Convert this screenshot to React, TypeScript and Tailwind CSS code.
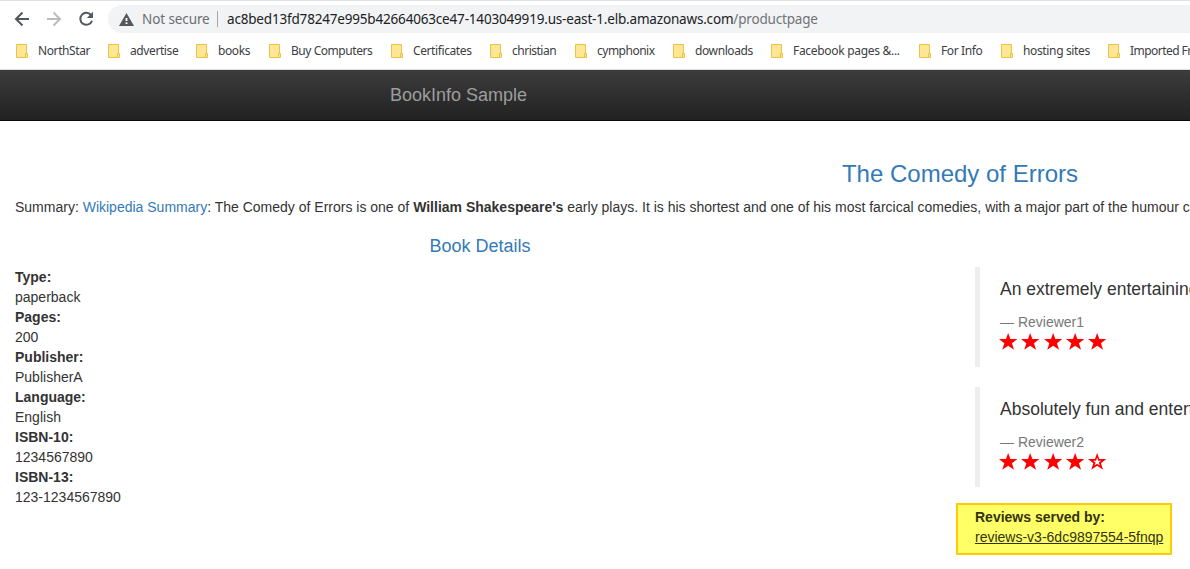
import React from "react";

const bookmarks = [
  { label: "NorthStar", width: "w-[92px]", spacing: "tracking-[-0.4px]" },
  { label: "advertise", width: "w-[88px]", spacing: "tracking-[-0.4px]" },
  { label: "books", width: "w-[73px]", spacing: "tracking-[-0.4px]" },
  { label: "Buy Computers", width: "w-[122px]", spacing: "tracking-[-0.45px]" },
  { label: "Certificates", width: "w-[99px]", spacing: "tracking-[-0.4px]" },
  { label: "christian", width: "w-[85px]", spacing: "tracking-[-0.5px]" },
  { label: "cymphonix", width: "w-[98px]", spacing: "tracking-[-0.5px]" },
  { label: "downloads", width: "w-[98px]", spacing: "tracking-[-0.4px]" },
  { label: "Facebook pages &...", width: "w-[148px]", spacing: "tracking-[-0.3px]" },
  { label: "For Info", width: "w-[82px]", spacing: "tracking-[-0.4px]" },
  { label: "hosting sites", width: "w-[107px]", spacing: "tracking-[-0.35px]" },
  { label: "Imported From IE", width: "w-[120px]", spacing: "tracking-[-0.55px]" },
];

const details = [
  ["Type:", "paperback"],
  ["Pages:", "200"],
  ["Publisher:", "PublisherA"],
  ["Language:", "English"],
  ["ISBN-10:", "1234567890"],
  ["ISBN-13:", "123-1234567890"],
];

const reviews = [
  { text: "An extremely entertaining play by Shakespeare. The slapstick humour is refreshing!", author: "Reviewer1", stars: 5 },
  { text: "Absolutely fun and entertaining. The play lacks thematic depth when compared to other plays by Shakespeare.", author: "Reviewer2", stars: 4 },
];

function FolderIcon() {
  return (
    <svg className="h-[14px] w-[12px] shrink-0" viewBox="0 0 12 14">
      <path d="M.5.5h10v13h-10z" fill="#ffe694" stroke="#e8c547" />
      <path d="M9.5 9.5h2v4h-2z" fill="#ffe694" stroke="#e8c547" />
    </svg>
  );
}

function Star({ filled }: { filled: boolean }) {
  return (
    <svg className="h-[17px] w-[18.3px] shrink-0" viewBox="0 0 18.3 17">
      <path d="M9.15 0l2.2 6.1h6.95l-5.35 4.1 2.1 6.5-5.9-3.9-5.9 3.9 2.1-6.5L0 6.1h6.95z" fill="#f00" />
      {!filled && <path d="M9.15 4.6l1.05 3.1h2.9l-2.35 1.8 1 3.1-2.6-1.8-2.6 1.8 1-3.1-2.35-1.8h2.9z" fill="#fff" />}
    </svg>
  );
}

function BrowserBar() {
  return (
    <header className="h-[70px] border-t border-[#dee1e6] bg-white font-['Noto_Sans',sans-serif]">
      <div className="flex h-9 items-center pl-[14px]">
        <svg className="mr-4 h-4 w-4 shrink-0" viewBox="0 0 16 16" fill="none" stroke="#54575b" strokeWidth="2">
          <path d="M15 8H2.5M8.5 1.5L2 8l6.5 6.5" />
        </svg>
        <svg className="mr-4 h-4 w-4 shrink-0" viewBox="0 0 16 16" fill="none" stroke="#babcbe" strokeWidth="2">
          <path d="M1 8h12.5M7.5 1.5L14 8l-6.5 6.5" />
        </svg>
        <svg className="h-4 w-4 shrink-0" viewBox="0 0 16 16">
          <path d="M13.3 4.4A6 6 0 1 0 14 9.7" fill="none" stroke="#54575b" strokeWidth="2" />
          <path d="M15 .8v6.2H8.8z" fill="#54575b" />
        </svg>
        <div className="ml-[14px] flex h-7 flex-1 items-center rounded-l-full bg-[#f1f3f4] pl-[11px] text-[13.5px] leading-7">
          <svg className="h-[13px] w-[15px] shrink-0" viewBox="0 0 15 13">
            <path d="M7.5 0L15 13H0z" fill="#54575b" />
            <path d="M6.6 5h1.8v3H6.6zM6.6 9.3h1.8V11H6.6z" fill="#fff" />
          </svg>
          <span className="ml-2 w-[75px] whitespace-nowrap tracking-[-0.1px] text-[#6b6e72]">Not secure</span>
          <span className="h-4 w-px bg-[#a5a8ac]" />
          <span className="ml-[9px] whitespace-nowrap tracking-[-0.18px] text-[#202124]">
            ac8bed13fd78247e995b42664063ce47-1403049919.us-east-1.elb.amazonaws.com
            <span className="text-[#707377]">/productpage</span>
          </span>
        </div>
      </div>
      <nav className="flex h-[33px] items-center overflow-hidden border-b border-[#dcdcdc] pb-[4px] pl-4">
        {bookmarks.map((b) => (
          <div key={b.label} className={`flex shrink-0 items-center gap-[10px] ${b.width}`}>
            <FolderIcon />
            <span className={`whitespace-nowrap text-[12px] leading-4 text-[#3c4043] ${b.spacing}`}>{b.label}</span>
          </div>
        ))}
      </nav>
    </header>
  );
}

export default function App() {
  return (
    <div className="h-[569px] w-[1190px] overflow-hidden bg-white font-['Liberation_Sans',Arial,sans-serif] text-[14px] leading-5 text-[#333]">
      <BrowserBar />
      <div className="w-[1920px]">
        <div className="flex h-[51px] items-center border-b border-[#080808] bg-linear-to-b from-[#3c3c3c] to-[#222] pb-px pl-[390px] text-[18px] text-[#9d9d9d]">
          BookInfo Sample
        </div>
        <section className="px-[15px] pt-[40px]">
          <h3 className="text-center text-[24px] leading-[26px] text-[#337ab7]">The Comedy of Errors</h3>
          <p className="mt-[10px] whitespace-nowrap">
            Summary: <a className="text-[#337ab7]">Wikipedia Summary</a>: The Comedy of Errors is one of{" "}
            <b>William Shakespeare's</b> early plays. It is his shortest and one of his most farcical comedies, with a
            major part of the humour coming from slapstick and mistaken identity.
          </p>
        </section>
        <div className="grid grid-cols-2">
          <section className="px-[15px] pt-[19px]">
            <h4 className="text-center text-[18px] leading-5 text-[#337ab7]">Book Details</h4>
            <dl className="mt-[11px]">
              {details.map(([term, value]) => (
                <React.Fragment key={term}>
                  <dt className="font-bold">{term}</dt>
                  <dd>{value}</dd>
                </React.Fragment>
              ))}
            </dl>
          </section>
          <section className="px-[15px] pt-[50px]">
            <div className="flex flex-col gap-5">
              {reviews.map((r) => (
                <blockquote key={r.author} className="h-[100px] border-l-[5px] border-[#eee] px-5 pt-[10px]">
                  <p className="whitespace-nowrap text-[17.5px] leading-[25px]">{r.text}</p>
                  <small className="mt-[10px] block text-[14px] leading-5 text-[#777]">— {r.author}</small>
                  <div className="-ml-px flex gap-[4px] pt-[1px]">
                    {[1, 2, 3, 4, 5].map((n) => (
                      <Star key={n} filled={n <= r.stars} />
                    ))}
                  </div>
                </blockquote>
              ))}
            </div>
            <dl className="-ml-[19px] mt-4 h-[52px] w-[216px] border-2 border-[#ffc90e] bg-[#ffff66] pl-[17px] pt-[2px]">
              <dt className="font-bold text-[#33330f]">Reviews served by:</dt>
              <dd className="text-[#33330f] underline">reviews-v3-6dc9897554-5fnqp</dd>
            </dl>
          </section>
        </div>
      </div>
    </div>
  );
}
